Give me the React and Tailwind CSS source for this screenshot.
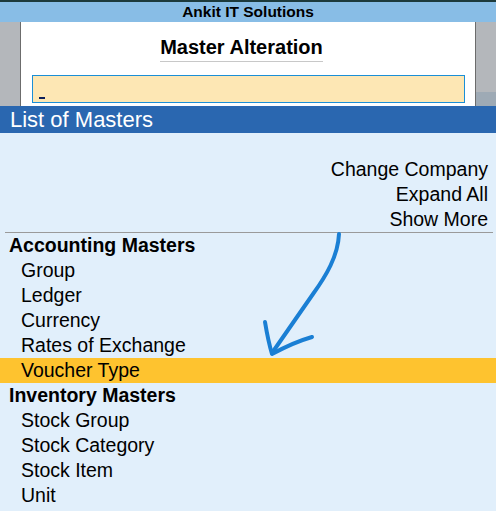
import React from 'react';

const accounting = ['Group', 'Ledger', 'Currency', 'Rates of Exchange', 'Voucher Type'];
const inventory = ['Stock Group', 'Stock Category', 'Stock Item', 'Unit'];

const Row = ({ label, active }) => (
  <div className={`h-[25px] leading-[25px] pl-[21px] ${active ? 'bg-[#fec32f]' : ''}`}>{label}</div>
);

const App = () => {
  return (
    <div
      className="w-[496px] h-[511px] overflow-hidden bg-[#e1effb] text-black"
      style={{ fontFamily: '"Liberation Sans", Arial, sans-serif' }}
    >
      <div className="h-[2px] bg-[#1c3a3c]" />
      <div className="h-[20px] bg-[#88bde6] flex items-center justify-center text-[15.5px] font-bold leading-none">
        Ankit IT Solutions
      </div>

      <div className="h-[84px] flex">
        <div className="w-[21px] bg-[#b4b7bb] border-r border-[#6c6c6c]" />
        <div className="flex-1 bg-white flex flex-col items-center">
          <div className="mt-[12px] mr-[13px] text-[20px] font-bold leading-[26px] border-b border-[#c8c8c8] pb-[1px]">
            Master Alteration
          </div>
          <div className="mt-[13px] w-[433px] h-[28px] bg-[#fde7b4] border border-[#1b8fd6] relative">
            <span className="absolute left-[6px] bottom-[3px] w-[6px] h-[2px] bg-[#0c1f5a]" />
          </div>
        </div>
        <div className="w-[21px] border-l border-[#6c6c6c] flex flex-col">
          <div className="flex-1 bg-[#b4b7bb]" />
          <div className="h-[14px] bg-[#9eaab5]" />
        </div>
      </div>

      <div className="h-[27px] bg-[#2a67b0] text-white text-[22px] leading-[27px] pl-[10px]">
        List of Masters
      </div>

      <div className="relative text-[19.5px]">
        <div className="pt-[24px] pr-[8px] text-right">
          <div className="h-[25px] leading-[25px]">Change Company</div>
          <div className="h-[25px] leading-[25px]">Expand All</div>
          <div className="h-[25px] leading-[25px]">Show More</div>
        </div>
        <div className="mx-[5px] mr-[3px] h-px bg-[#9a9a9a]" />
        <div className="h-[25px] leading-[25px] pl-[9px] font-bold">Accounting Masters</div>
        {accounting.map((item) => (
          <Row key={item} label={item} active={item === 'Voucher Type'} />
        ))}
        <div className="h-[25px] leading-[25px] pl-[9px] font-bold">Inventory Masters</div>
        {inventory.map((item) => (
          <Row key={item} label={item} />
        ))}

        <svg className="absolute left-0 top-0 pointer-events-none" width="496" height="380" viewBox="0 133 496 380">
          <path
            d="M339 234 C 338 256, 326 276, 313 294 C 300 313, 285 334, 272 353"
            fill="none"
            stroke="#1a7fd4"
            strokeWidth="4"
            strokeLinecap="round"
          />
          <path
            d="M265 322 C 267 334, 269 344, 272 354 C 285 347, 298 341, 312 337"
            fill="none"
            stroke="#1a7fd4"
            strokeWidth="4"
            strokeLinecap="round"
            strokeLinejoin="round"
          />
        </svg>
      </div>
    </div>
  );
};

export default App;
